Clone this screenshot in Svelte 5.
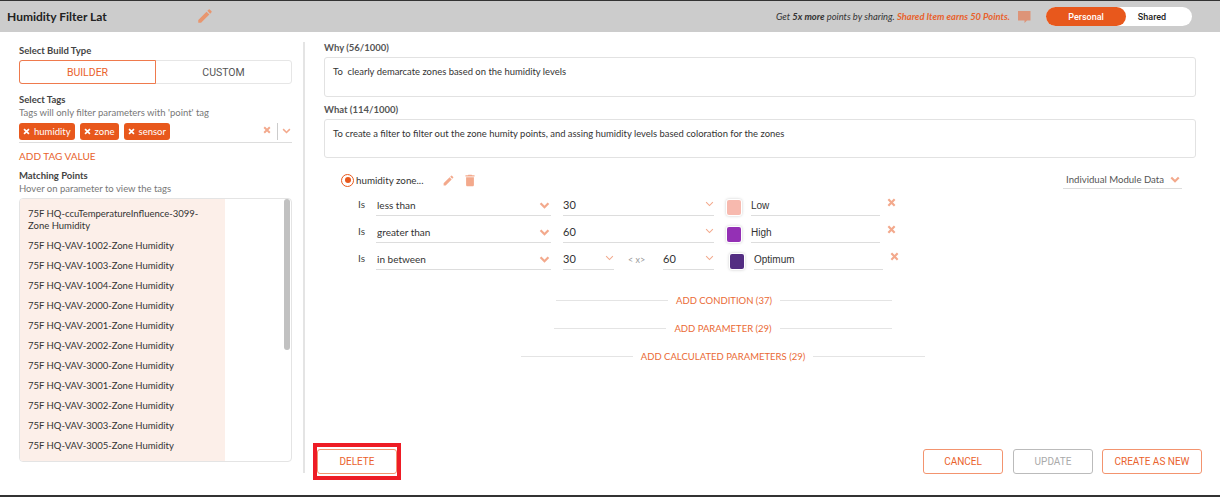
<script>
  const points = ['75F HQ-ccuTemperatureInfluence-3099-Zone Humidity','75F HQ-VAV-1002-Zone Humidity','75F HQ-VAV-1003-Zone Humidity','75F HQ-VAV-1004-Zone Humidity','75F HQ-VAV-2000-Zone Humidity','75F HQ-VAV-2001-Zone Humidity','75F HQ-VAV-2002-Zone Humidity','75F HQ-VAV-3000-Zone Humidity','75F HQ-VAV-3001-Zone Humidity','75F HQ-VAV-3002-Zone Humidity','75F HQ-VAV-3003-Zone Humidity','75F HQ-VAV-3005-Zone Humidity'];
  const tags = ['humidity','zone','sensor'];
  const pencil = 'M3 17.25V21h3.75L17.81 9.94l-3.75-3.75L3 17.25zM20.71 7.04a1 1 0 0 0 0-1.41l-2.34-2.34a1 1 0 0 0-1.41 0l-1.83 1.83 3.75 3.75 1.83-1.83z';
  const trash = 'M6 19c0 1.1.9 2 2 2h8c1.1 0 2-.9 2-2V7H6v12zM19 4h-3.5l-1-1h-5l-1 1H5v2h14V4z';
</script>

{#snippet chev(w, h, sw)}
  <svg class="chev" width={w} height={h} viewBox="0 0 12 8"><path d="M1.5 1.5 6 6l4.500-4.500" fill="none" stroke="#f3a98c" stroke-width={sw}/></svg>
{/snippet}
{#snippet cross(s)}
  <svg width={s} height={s} viewBox="0 0 10 10"><path d="M1.500 1.500l7 7M8.500 1.500l-7 7" stroke="#f3a98c" stroke-width="2.400"/></svg>
{/snippet}

<div class="page">
  <header>
    <div class="title">Humidity Filter Lat</div>
    <svg class="pen" width="18" height="18" viewBox="0 0 24 24"><path d={pencil} fill="#e8966f"/></svg>
    <div class="promo">Get <b>5x more</b> points by sharing. <b class="or">Shared Item earns 50 Points.</b></div>
    <svg class="msg" width="13" height="14" viewBox="0 0 13 14"><path d="M0 1h12.500v9.500H9L6.500 13V10.500H0z" fill="#dd9478"/></svg>
    <div class="toggle"><span class="on">Personal</span><span class="off">Shared</span></div>
  </header>

  <div class="body">
    <aside>
      <div class="lbl">Select Build Type</div>
      <div class="seg"><div class="builder">BUILDER</div><div class="custom">CUSTOM</div></div>
      <div class="lbl tagl">Select Tags</div>
      <div class="hint">Tags will only filter parameters with 'point' tag</div>
      <div class="tags">
        {#each tags as t}
          <span class="tag"><svg width="7" height="7" viewBox="0 0 10 10"><path d="M1.500 1.500l7 7M8.500 1.500l-7 7" stroke="#fff" stroke-width="2.400"/></svg>{t}</span>
        {/each}
        <span class="tagx">{@render cross(8)}</span>
        <span class="tagsep"></span>
        {@render chev(9, 6, 2)}
      </div>
      <div class="addtag">ADD TAG VALUE</div>
      <div class="lbl mp">Matching Points</div>
      <div class="hint">Hover on parameter to view the tags</div>
      <div class="list">
        <div class="items">
          {#each points as p}<div class="item">{p}</div>{/each}
        </div>
        <div class="thumb"></div>
      </div>
    </aside>

    <main>
      <div class="flabel">Why (56/1000)</div>
      <div class="area">To&nbsp; clearly demarcate zones based on the humidity levels</div>
      <div class="flabel w2">What (114/1000)</div>
      <div class="area a2">To create a filter to filter out the zone humity points, and assing humidity levels based coloration for the zones</div>

      <div class="param">
        <span class="radio"><span></span></span>
        <span class="pname">humidity zone...</span>
        <svg class="pi" width="13" height="13" viewBox="0 0 24 24"><path d={pencil} fill="#f3a98c"/></svg>
        <svg class="ti" width="12" height="13" viewBox="3 2 18 20"><path d={trash} fill="#f3a98c"/></svg>
        <span class="module">Individual Module Data {@render chev(10, 7, 2.6)}</span>
      </div>

      <div class="row">
        <span class="is">Is</span>
        <span class="sel s1">less than {@render chev(11, 7, 2.6)}</span>
        <span class="sel s2">30 {@render chev(9, 6, 1.400)}</span>
        <span class="sw" style="--c:#f7b9ae"><i></i></span>
        <span class="inp">Low</span>
        <span class="x">{@render cross(9)}</span>
      </div>
      <div class="row">
        <span class="is">Is</span>
        <span class="sel s1">greater than {@render chev(11, 7, 2.6)}</span>
        <span class="sel s2">60 {@render chev(9, 6, 1.400)}</span>
        <span class="sw" style="--c:#9430b5"><i></i></span>
        <span class="inp">High</span>
        <span class="x">{@render cross(9)}</span>
      </div>
      <div class="row">
        <span class="is">Is</span>
        <span class="sel s1">in between {@render chev(11, 7, 2.6)}</span>
        <span class="sel s3">30 {@render chev(9, 6, 1.400)}</span>
        <span class="between">&lt; x&gt;</span>
        <span class="sel s3">60 {@render chev(9, 6, 1.400)}</span>
        <span class="sw sw3" style="--c:#532d82"><i></i></span>
        <span class="inp">Optimum</span>
        <span class="x">{@render cross(9)}</span>
      </div>

      <div class="add a1"><span></span>ADD CONDITION (37)<span></span></div>
      <div class="add a2r"><span></span>ADD PARAMETER (29)<span></span></div>
      <div class="add a2r"><span></span>ADD CALCULATED PARAMETERS (29)<span></span></div>

      <div class="foot">
        <div class="delwrap"><button class="btn">DELETE</button></div>
        <div class="right">
          <button class="btn">CANCEL</button>
          <button class="btn gray">UPDATE</button>
          <button class="btn create">CREATE AS NEW</button>
        </div>
      </div>
    </main>
  </div>
</div>

<style>
  :global(body) { margin: 0; background: #fff; }
  .page { width: 1220px; height: 497px; box-sizing: border-box; overflow: hidden; display: flex; flex-direction: column; border-top: 1px solid #333; border-bottom: 2px solid #333; font-family: Lato, sans-serif; color: #333; position: relative; }
  header { height: 31px; flex: none; background: #cccccc; display: flex; align-items: center; }
  .title { margin-left: 7px; width: 189px; font-size: 12px; font-weight: 700; color: #222; white-space: nowrap; }
  .pen { margin-top: -2px; }
  .promo { margin-left: auto; font-size: 9.4px; font-style: italic; color: #333; white-space: nowrap; }
  .promo .or { color: #e8622c; font-weight: 700; }
  .msg { margin: 0 15px 0 8px; }
  .toggle { width: 146px; height: 19px; margin-right: 28px; border-radius: 10px; background: #fff; display: flex; font-family: Roboto, sans-serif; font-size: 9px; font-weight: 500; }
  .toggle span { display: flex; align-items: center; justify-content: center; }
  .on { width: 80px; background: #e8581c; color: #fff; border-radius: 10px; }
  .off { width: 52px; color: #222; }
  .body { flex: 1; display: flex; min-height: 0; }
  aside { box-sizing: border-box; margin: 10px 0 22px; padding: 3px 11px 11px 19px; width: 305px; border-right: 2px solid #e4e4e4; display: flex; flex-direction: column; }
  .lbl { font-size: 9.5px; font-weight: 700; color: #444; line-height: 12px; }
  .seg { display: flex; height: 24px; margin-top: 3px; border: 1px solid #e6e6e6; border-radius: 3px; box-sizing: border-box; font-family: Roboto, sans-serif; font-size: 10.500px; }
  .seg div { display: flex; align-items: center; justify-content: center; }
  .builder { width: 137px; box-sizing: border-box; margin: -1px 0 -1px -1px; border: 1px solid #ef7a4d; border-radius: 3px 0 0 3px; color: #ea622c; }
  .custom { flex: 1; color: #555; }
  .tagl { margin-top: 10px; }
  .hint { font-size: 9.500px; color: #777; line-height: 13px; }
  .tags { display: flex; align-items: center; gap: 5px; height: 22px; margin-top: 1px; border-bottom: 1px solid #ddd; }
  .tag { height: 17px; box-sizing: border-box; padding: 0 4px; background: #e8581c; color: #fff; border-radius: 3px; font-size: 9.500px; display: flex; align-items: center; gap: 4px; }
  .tagx { margin-left: auto; margin-right: 1px; display: flex; margin-top: -3px; }
  .tagsep { width: 1px; height: 17px; background: #ccc; }
  .tags :global(.chev) { margin: 0 1px 0 -1px; }
  .addtag { margin-top: 7px; font-size: 10px; color: #e8622c; line-height: 12px; }
  .mp { margin-top: 8px; }
  .list { position: relative; flex: 1; min-height: 0; margin-top: 3px; border: 1px solid #e4e4e4; border-radius: 4px; overflow: hidden; }
  .items { width: 205px; background: #fcefe9; padding: 9px 0 0; height: 100%; box-sizing: border-box; overflow: hidden; }
  .item { padding: 0 10px 0 8px; font-size: 9.500px; line-height: 12px; margin-bottom: 8px; color: #333; }
  .thumb { position: absolute; top: 0; right: 1px; width: 6px; height: 151px; background: #c1c1c1; border-radius: 3px; }
  main { flex: 1; display: flex; flex-direction: column; padding: 10px 24px 0 19px; min-width: 0; }
  .flabel { font-size: 9.500px; font-weight: 700; color: #555; line-height: 12px; }
  .w2 { margin-top: 7px; }
  .area { width: 872px; height: 40px; box-sizing: border-box; margin-top: 3px; padding: 8px; border: 1px solid #e2e2e2; border-radius: 3px; font-size: 9.440px; line-height: 12px; color: #333; }
  .a2 { height: 39px; padding-top: 8px; margin-top: 3px; }
  .param { display: flex; align-items: center; height: 16px; margin: 14px 14px 0 17px; width: 841px; }
  .radio { width: 11px; height: 11px; border: 1.500px solid #e8581c; border-radius: 50%; display: flex; align-items: center; justify-content: center; }
  .radio span { width: 6px; height: 6px; background: #e8581c; border-radius: 50%; }
  .pname { margin-left: 2px; font-size: 9.800px; color: #333; width: 86px; white-space: nowrap; }
  .ti { margin-left: 9px; }
  .module { margin-left: auto; display: flex; align-items: center; gap: 6px; font-size: 9.600px; color: #555; border-bottom: 1px solid #ddd; padding: 3px 2px 3px 3px; }
  .row { display: flex; align-items: flex-end; height: 21px; margin-left: 34px; margin-top: 6px; font-size: 10px; }
  .param + .row { margin-top: 7px; }
  .is { width: 18px; align-self: center; margin-top: -4px; color: #444; }
  .sel { display: flex; align-items: center; justify-content: space-between; box-sizing: border-box; height: 20px; padding-bottom: 1px; border-bottom: 1px solid #ddd; color: #333; white-space: nowrap; }
  .s1 { width: 175px; padding-right: 1px; padding-left: 1px; }
  .s2 { width: 151px; margin-left: 12px; font-size: 11px; }
  .s2, .s3 { padding-bottom: 3px; }
  .s3 { width: 51px; margin-left: 12px; font-size: 11px; }
  .between { width: 35px; margin-left: 14px; margin-right: -12px; align-self: center; color: #999; font-size: 9px; }
  .sw { width: 16px; height: 17px; margin-left: 12px; box-sizing: border-box; padding: 1px; background: #fff; border-radius: 3px; box-shadow: 0 0 3px #ccc; display: flex; }
  .sw i { flex: 1; background: var(--c); border-radius: 2px; }
  .sw3 { margin-left: 15px; }
  .inp { width: 129px; box-sizing: border-box; height: 20px; margin-left: 9px; display: flex; align-items: center; font-family: "Liberation Sans", sans-serif; font-size: 10px; color: #333; border-bottom: 1px solid #ddd; }
  .x { margin-left: 7px; align-self: center; display: flex; margin-top: -6px; }
  .add { display: flex; align-items: center; justify-content: center; gap: 8px; width: 810px; margin-left: -5px; height: 28px; font-size: 9.500px; color: #ea6a35; white-space: nowrap; }
  .add span { width: 112px; height: 1px; background: #e4e4e4; }
  .a1 { margin-top: 16px; }
  .a2r { margin-left: -6px; }
  .foot { margin-top: auto; display: flex; justify-content: space-between; margin-left: -11px; margin-bottom: 15px; width: 889px; align-items: center; }
  .delwrap { border: 4px solid #ee1c25; padding: 2px 0; height: 37px; box-sizing: border-box; display: flex; }
  .btn { width: 80px; height: 25px; box-sizing: border-box; background: #fff; border: 1px solid #f3946f; border-radius: 3px; font-family: Roboto, sans-serif; font-size: 10px; color: #ea622c; padding: 0; }
  .right { display: flex; gap: 10px; }
  .gray { border-color: #bbb; color: #aaa; }
  .create { width: 100px; margin-left: -1px; }
</style>
